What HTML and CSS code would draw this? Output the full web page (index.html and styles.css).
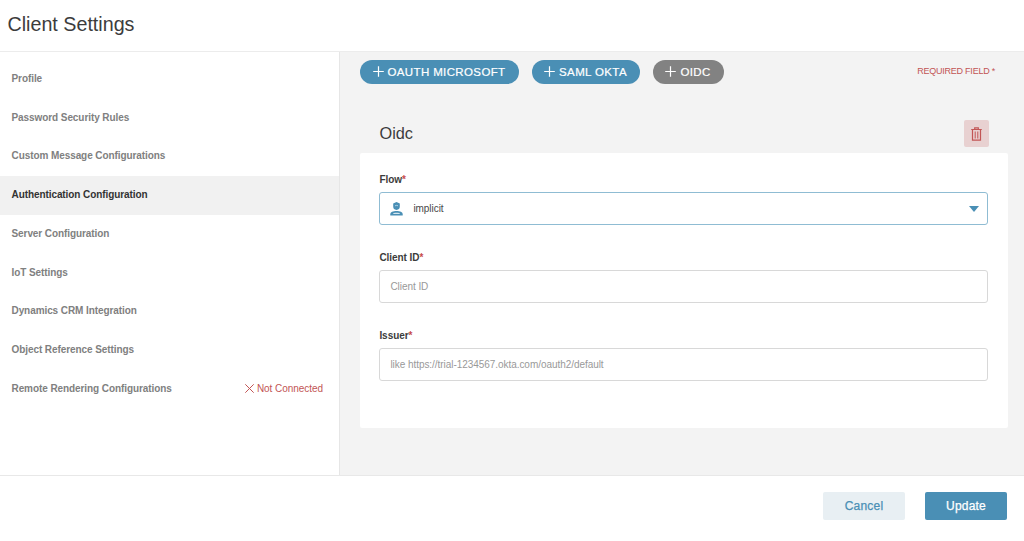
FILE: index.html
```html
<!DOCTYPE html>
<html lang="en">
<head>
    <meta charset="UTF-8">
    <meta name="viewport" content="width=device-width, initial-scale=1.0">
    <title>Client Settings</title>
    <link rel="stylesheet" href="styles.css">
</head>
<body>
    <header class="page-header">
        <h1>Client Settings</h1>
    </header>

    <div class="page-body">
        <nav class="sidebar">
            <a class="nav-item">Profile</a>
            <a class="nav-item">Password Security Rules</a>
            <a class="nav-item">Custom Message Configurations</a>
            <a class="nav-item active">Authentication Configuration</a>
            <a class="nav-item">Server Configuration</a>
            <a class="nav-item">IoT Settings</a>
            <a class="nav-item">Dynamics CRM Integration</a>
            <a class="nav-item">Object Reference Settings</a>
            <a class="nav-item">Remote Rendering Configurations
                <span class="status">
                    <svg width="9" height="9" viewBox="0 0 9 9" fill="none" stroke="#c25555"><path d="M.3 .3l8.4 8.4M8.7 .3l-8.4 8.4"/></svg>
                    Not Connected
                </span>
            </a>
        </nav>

        <main class="content">
            <div class="toolbar">
                <button class="pill pill-microsoft"><svg width="11" height="11" viewBox="0 0 11 11"><path d="M5.5 .2v10.6M.2 5.5h10.6" stroke="currentColor" stroke-width="1.2"/></svg>OAUTH MICROSOFT</button>
                <button class="pill pill-okta"><svg width="11" height="11" viewBox="0 0 11 11"><path d="M5.5 .2v10.6M.2 5.5h10.6" stroke="currentColor" stroke-width="1.2"/></svg>SAML OKTA</button>
                <button class="pill pill-oidc"><svg width="11" height="11" viewBox="0 0 11 11"><path d="M5.5 .2v10.6M.2 5.5h10.6" stroke="currentColor" stroke-width="1.2"/></svg>OIDC</button>
                <span class="required-note">REQUIRED FIELD *</span>
            </div>

            <div class="section-head">
                <h2>Oidc</h2>
                <button class="delete-btn" aria-label="Delete">
                    <svg width="11" height="14" viewBox="0 0 11 14" fill="none" stroke="currentColor"><path d="M.2 2.5h10.6M3.7 2.2V.9h3.6v1.3M1.5 2.7v10.5h8V2.7" stroke-width="1.2"/><path d="M4.2 4.5v7M6.8 4.5v7"/></svg>
                </button>
            </div>

            <section class="card">
                <div class="field">
                    <label>Flow<span class="star">*</span></label>
                    <div class="select">
                        <svg class="user-icon" width="13" height="14" viewBox="0 0 13 14"><path fill="currentColor" d="M6.5 0L9.8 1.6V4.600a3.300 3.300 0 0 1-6.600 0V1.600z"/><path d="M5 3.800q1.500-.8 3 0" fill="none" stroke="#c7deea" stroke-width=".8"/><path fill="currentColor" d="M.3 13.400v-1.200C.3 10 3 9 6.500 9s6.200 1 6.200 3.200v1.200z"/><path fill="#d5e6ef" d="M2.800 12c.2-.7 1.700-1.200 3.700-1.200s3.500.5 3.700 1.200z"/></svg>
                        <span class="select-value">implicit</span>
                        <svg class="caret" width="10" height="6" viewBox="0 0 10 6"><path fill="currentColor" d="M0 0h10L5 6z"/></svg>
                    </div>
                </div>
                <div class="field">
                    <label for="clientId">Client ID<span class="star">*</span></label>
                    <input id="clientId" type="text" placeholder="Client ID">
                </div>
                <div class="field">
                    <label for="issuer">Issuer<span class="star">*</span></label>
                    <input id="issuer" type="text" placeholder="like https://trial-1234567.okta.com/oauth2/default">
                </div>
            </section>
        </main>
    </div>

    <footer class="page-footer">
        <button class="btn btn-cancel">Cancel</button>
        <button class="btn btn-update">Update</button>
    </footer>
</body>
</html>
```
FILE: styles.css
```css
* {
    box-sizing: border-box;
}
body {
    font-family: "Liberation Sans", Arial, sans-serif;
    margin: 0;
    height: 541px;
    display: flex;
    flex-direction: column;
    background-color: #fff;
    color: #3c3c3c;
    overflow: hidden;
}
button {
    font-family: inherit;
    border: none;
    padding: 0;
    cursor: pointer;
}
svg {
    flex: none;
}
.page-header {
    height: 52px;
    padding: 12px 7.5px 0;
    border-bottom: 1px solid #ececec;
}
h1 {
    margin: 0;
    font-size: 19.7px;
    line-height: 24px;
    font-weight: normal;
}
.page-body {
    display: flex;
    height: 423px;
}
.sidebar {
    width: 340px;
    padding-top: 7.7px;
    border-right: 1px solid #e6e6e6;
}
.nav-item {
    display: flex;
    align-items: center;
    justify-content: space-between;
    height: 38.75px;
    padding: 0 16px 1.5px 11.5px;
    font-size: 10px;
    letter-spacing: -0.08px;
    font-weight: bold;
    color: #808080;
}
.nav-item.active {
    background-color: #f1f1f1;
    color: #333;
}
.status {
    display: flex;
    align-items: center;
    gap: 3px;
    font-weight: normal;
    letter-spacing: -0.05px;
    color: #c25555;
}
.content {
    flex: 1;
    padding: 7.5px 16px 0 20px;
    background-color: #f3f3f3;
}
.toolbar {
    display: flex;
    gap: 13px;
    height: 24.5px;
}
.pill {
    display: flex;
    align-items: center;
    justify-content: center;
    gap: 4px;
    height: 24.5px;
    padding-right: 1px;
    border-radius: 13px;
    background-color: #4a8fb5;
    color: #fff;
    font-size: 11.5px;
    letter-spacing: 0.37px;
    -webkit-text-stroke: 0.2px currentColor;
}
.pill-microsoft {
    width: 159px;
}
.pill-okta {
    width: 108px;
}
.pill-oidc {
    width: 71px;
    background-color: #828282;
}
.required-note {
    margin-left: auto;
    padding: 5.5px 13px 0 0;
    font-size: 9px;
    line-height: 12px;
    letter-spacing: -0.23px;
    color: #c25555;
}
.section-head {
    display: flex;
    align-items: center;
    justify-content: space-between;
    height: 27px;
    margin: 36px 19.5px 6px;
}
h2 {
    margin: 0;
    font-size: 16.3px;
    font-weight: normal;
}
.delete-btn {
    display: flex;
    align-items: center;
    justify-content: center;
    width: 25px;
    height: 27px;
    border-radius: 2px;
    background-color: #e8d1d1;
    color: #c25555;
}
.card {
    height: 275px;
    padding: 20px 19.6px 0 19.4px;
    border-radius: 2px;
    background-color: #fff;
}
.field {
    height: 78.2px;
}
label {
    display: block;
    height: 19px;
    font-size: 10px;
    line-height: 13px;
    letter-spacing: -0.05px;
    font-weight: bold;
}
.star {
    color: #c84b4b;
}
.select,
input {
    display: flex;
    align-items: center;
    width: 100%;
    height: 33px;
    padding: 0 10px;
    border: 1px solid #d8d8d8;
    border-radius: 3px;
    background-color: #fff;
    font-family: inherit;
    font-size: 10px;
    letter-spacing: -0.05px;
}
.select {
    padding: 0 8px 0 10px;
    border-color: #8fbcd3;
    color: #4a8fb5;
}
.select-value {
    margin-left: 10px;
    color: #484848;
}
.caret {
    margin-left: auto;
}
input::placeholder {
    color: #999;
}
.page-footer {
    display: flex;
    justify-content: flex-end;
    gap: 20px;
    flex: 1;
    padding: 16px 17px 0 0;
    border-top: 1px solid #e8e8e8;
}
.btn {
    width: 82px;
    height: 28px;
    border-radius: 2px;
    font-size: 12px;
    letter-spacing: 0.2px;
    -webkit-text-stroke: 0.25px currentColor;
}
.btn-cancel {
    background-color: #e8eff3;
    color: #4a8fb5;
}
.btn-update {
    background-color: #4a8fb5;
    color: #fff;
}
```
